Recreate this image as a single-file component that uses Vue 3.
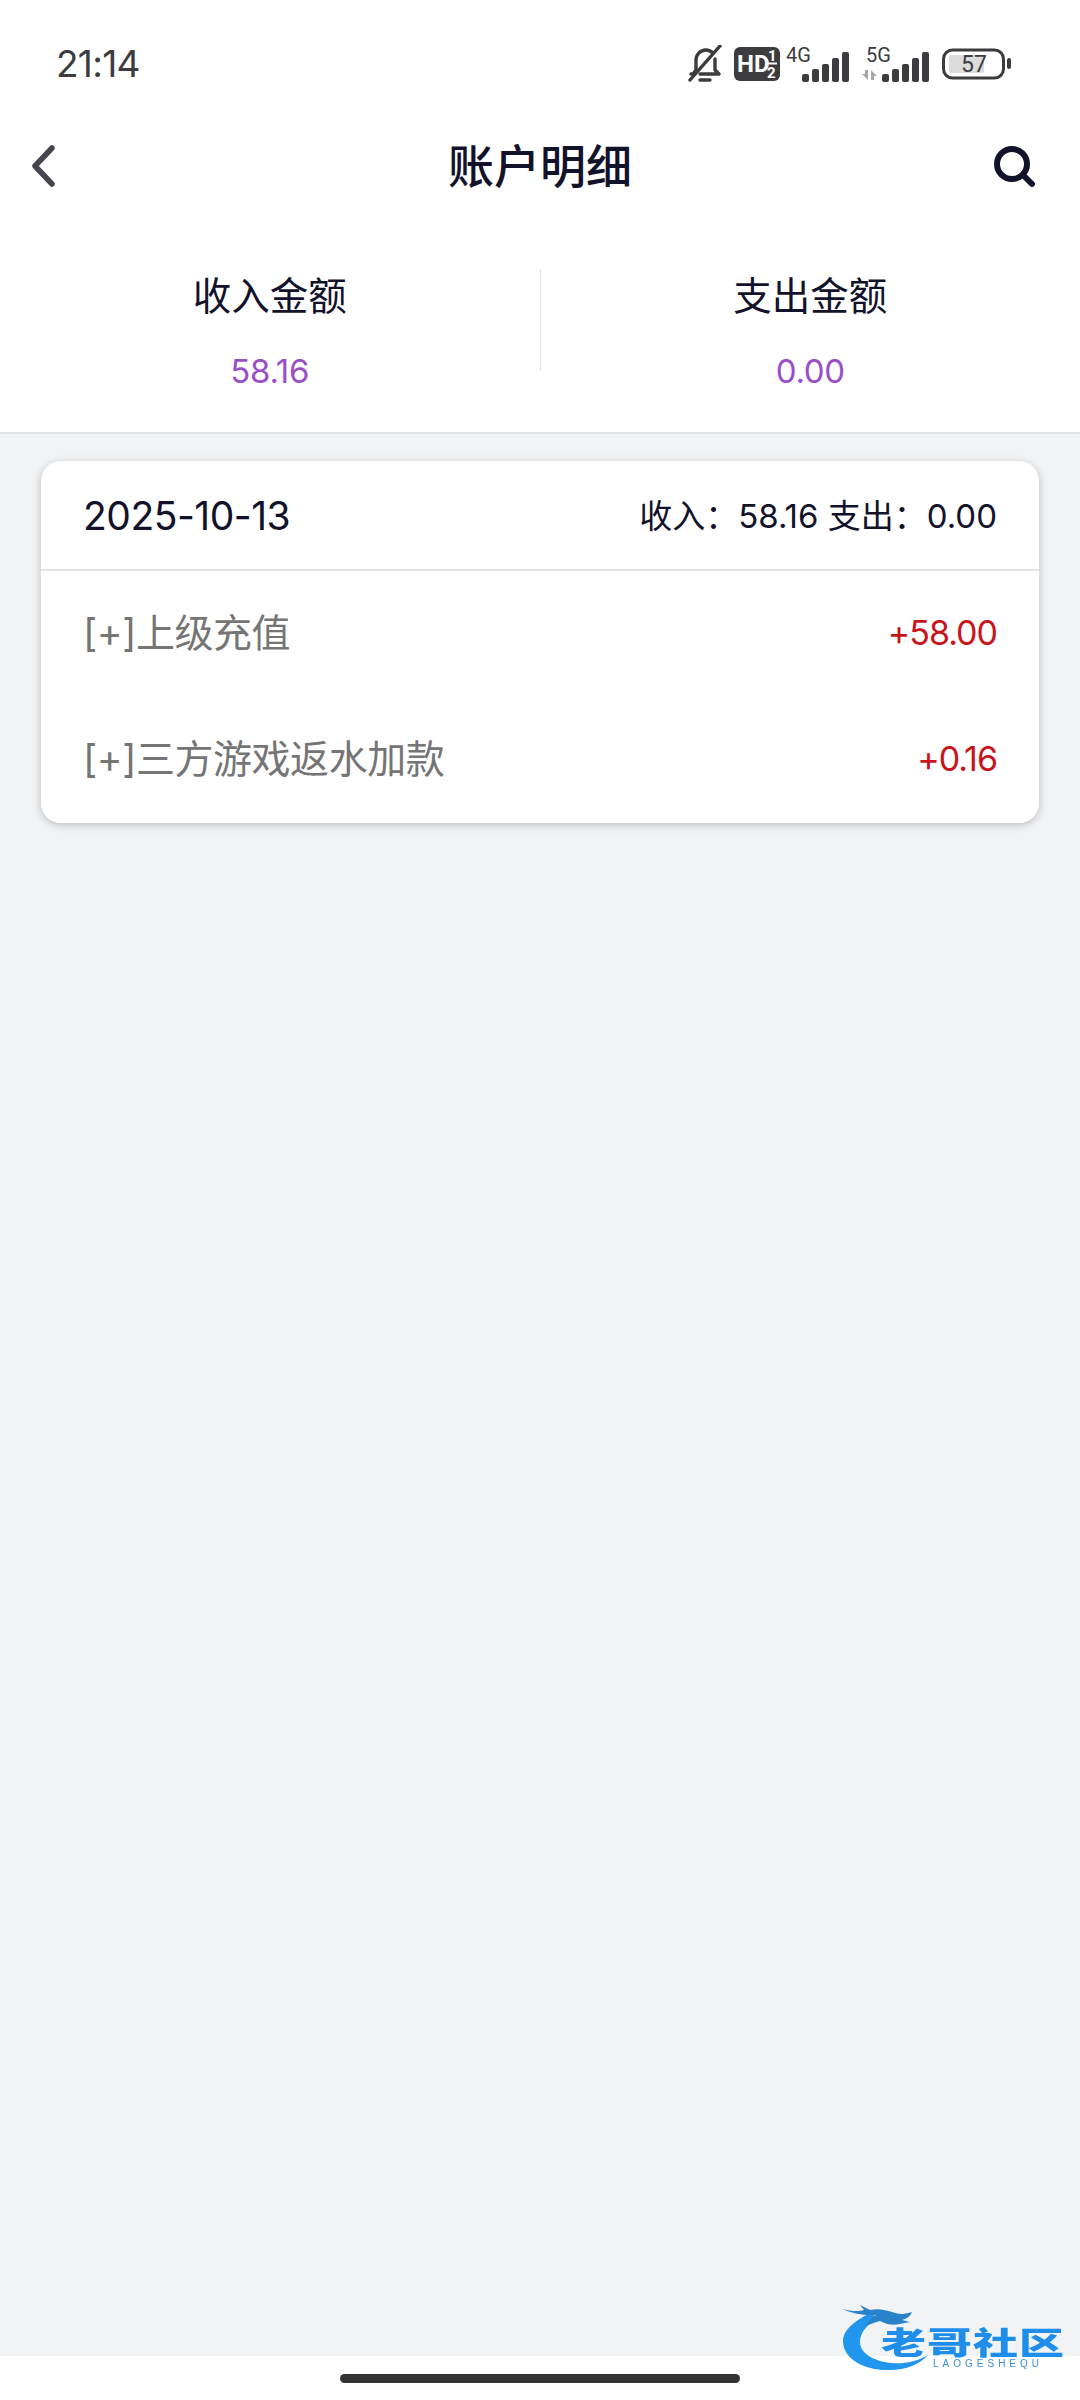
<script setup>
const rows = [
  { label: '[+]上级充值', amount: '+58.00' },
  { label: '[+]三方游戏返水加款', amount: '+0.16' },
]
const bars = [
  { x: 0, h: 8 },
  { x: 10, h: 13 },
  { x: 20, h: 18 },
  { x: 30, h: 24 },
  { x: 40, h: 30 },
]
</script>

<template>
  <div class="page">
    <div class="top">
      <div class="status">
        <span class="time">21:14</span>
        <div class="status-icons">
          <svg class="bell" width="34" height="38" viewBox="0 0 34 38" fill="none" stroke="#3c3c3f" stroke-width="3.4" stroke-linecap="round" stroke-linejoin="round">
            <path d="M3 29h2l3-4V15c0-5 4-10 10-10 3 0 5 1 7 3" />
            <path d="M27 14v11l4 4H12" />
            <path d="M12 35h10" />
            <path d="M32 1L2 35" />
          </svg>
          <svg class="hd" width="46" height="34" viewBox="0 0 46 34">
            <rect width="46" height="34" rx="6" fill="#3c3c3f" />
            <text x="3" y="25" class="hd-text">HD</text>
            <text x="34" y="14" class="hd-sub">1</text>
            <rect x="32" y="15.5" width="11" height="2" fill="#fff" />
            <text x="33" y="31" class="hd-sub">2</text>
          </svg>
          <svg class="net" width="64" height="46" viewBox="0 0 64 46">
            <text x="0" y="21" class="net-label">4G</text>
            <rect v-for="b in bars" :key="b.x" :x="b.x + 16" :y="41 - b.h" width="7" :height="b.h" rx="2" fill="#3c3c3f" />
          </svg>
          <svg class="net second" width="68" height="46" viewBox="0 0 68 46">
            <text x="4" y="21" class="net-label">5G</text>
            <path d="M6 29v10L0 33h3v-4zM9 39V29l6 6h-3v4z" fill="#a8a8ab" />
            <rect v-for="b in bars" :key="b.x" :x="b.x + 20" :y="41 - b.h" width="7" :height="b.h" rx="2" fill="#3c3c3f" />
          </svg>
          <svg class="battery" width="70" height="32" viewBox="0 0 70 32">
            <rect x="1.5" y="2" width="60" height="28" rx="9" fill="none" stroke="#3c3c3f" stroke-width="3" />
            <rect x="7" y="7" width="35" height="18" rx="2" fill="#dcdcdc" />
            <text x="32" y="24" class="battery-text">57</text>
            <rect x="65" y="10" width="4" height="11" rx="2" fill="#3c3c3f" />
          </svg>
        </div>
      </div>

      <div class="nav">
        <svg class="back" width="28" height="42" viewBox="0 0 28 42" fill="none" stroke="#45454f" stroke-width="5.5" stroke-linecap="round" stroke-linejoin="round">
          <path d="M22 3L5 21l17 18" />
        </svg>
        <span class="title">账户明细</span>
        <svg class="search" width="44" height="44" viewBox="0 0 44 44" fill="none" stroke="#12122a" stroke-linecap="round">
          <circle cx="20" cy="20" r="15" stroke-width="6" />
          <path d="M31 31l9 9" stroke-width="6" />
        </svg>
      </div>

      <div class="summary">
        <div class="summary-cell">
          <span class="summary-label">收入金额</span>
          <span class="summary-value">58.16</span>
        </div>
        <div class="summary-rule"></div>
        <div class="summary-cell">
          <span class="summary-label">支出金额</span>
          <span class="summary-value">0.00</span>
        </div>
      </div>
    </div>

    <main class="content">
      <section class="card">
        <header class="card-head">
          <span class="date">2025-10-13</span>
          <span class="totals">收入：58.16 支出：0.00</span>
        </header>
        <div v-for="row in rows" :key="row.label" class="row">
          <span class="row-label">{{ row.label }}</span>
          <span class="row-amount">{{ row.amount }}</span>
        </div>
      </section>
    </main>

    <div class="home-bar">
      <span class="home-pill"></span>
    </div>

    <div class="brand">
      <svg class="dragon" width="120" height="74" viewBox="0 0 120 74">
        <path d="M30 9C12 18 2 28 3 38c1 18 23 29 47 28 16 0 30-6 38-15-12 7-24 9-36 8-16-1-32-9-32-21 0-10 8-18 18-24z" fill="#2196ee" />
        <path d="M2 5c8 2 16 3 22 1l-4-5 10 5c8-2 16 0 22 2 8 3 14 2 20 0-2 5-6 7-10 8l8 2-10 2c-8 2-14 0-20-3-6 2-10 3-14 5 2-5 6-9 10-11C26 12 14 10 2 5z" fill="#2a83c9" />
      </svg>
      <span class="brand-name">老哥社区</span>
      <span class="brand-sub">LAOGESHEQU</span>
    </div>
  </div>
</template>

<style scoped>
.page {
  position: relative;
  width: 1080px;
  height: 2400px;
  background: #f2f3f5;
  font-family: Inter, "Noto Sans CJK SC", sans-serif;
  overflow: hidden;
  display: flex;
  flex-direction: column;
}
.top {
  background: #fff;
  border-bottom: 2px solid #e4e4e6;
}
.status {
  height: 124px;
  padding: 3px 68px 0 56px;
  box-sizing: border-box;
  display: flex;
  align-items: center;
  justify-content: space-between;
}
.time {
  font-size: 37px;
  color: #3c3c3f;
  letter-spacing: -0.7px;
}
.status-icons {
  display: flex;
  align-items: center;
  gap: 6px;
}
.bell {
  margin-right: 6px;
}
.hd-text {
  font: 700 24px Roboto, sans-serif;
  fill: #fff;
}
.hd-sub {
  font: 700 15px Roboto, sans-serif;
  fill: #fff;
}
.net-label {
  font: 400 20px Roboto, sans-serif;
  fill: #3c3c3f;
}
.second {
  margin-left: 6px;
}
.battery {
  margin-left: 6px;
}
.battery-text {
  font: 400 23px Roboto, sans-serif;
  fill: #3c3c3f;
  text-anchor: middle;
}
.nav {
  height: 84px;
  padding: 0 44px 0 30px;
  display: flex;
  align-items: center;
  justify-content: space-between;
  position: relative;
}
.title {
  position: absolute;
  left: 0;
  right: 0;
  padding-bottom: 6px;
  text-align: center;
  font-size: 46px;
  font-weight: 500;
  color: #12122a;
}
.summary {
  height: 224px;
  display: flex;
  align-items: center;
  padding-top: 21px;
  box-sizing: border-box;
}
.summary-cell {
  flex: 1;
  display: flex;
  flex-direction: column;
  align-items: center;
  gap: 30px;
}
.summary-label {
  font-size: 38.5px;
  line-height: 50px;
  color: #12122a;
}
.summary-value {
  font-size: 33px;
  line-height: 40px;
  letter-spacing: -0.3px;
  color: #9a4fc8;
}
.summary-rule {
  width: 1px;
  height: 102px;
  margin-bottom: 21px;
  background: #e4e4e6;
}
.content {
  flex: 1;
  padding: 27px 41px 0;
}
.card {
  background: #fff;
  border-radius: 20px;
  box-shadow: 0 2px 8px rgba(0, 0, 0, 0.22);
  overflow: hidden;
}
.card-head {
  height: 108px;
  padding: 0 42px;
  display: flex;
  align-items: center;
  justify-content: space-between;
  border-bottom: 2px solid #e4e4e6;
}
.date {
  font-size: 39px;
  letter-spacing: -0.5px;
  color: #12122a;
}
.totals {
  padding-bottom: 2px;
  font-size: 33px;
  color: #12122a;
}
.row {
  height: 126px;
  padding: 0 42px;
  display: flex;
  align-items: center;
  justify-content: space-between;
}
.row-label {
  padding-bottom: 8px;
  font-size: 39px;
  letter-spacing: -0.45px;
  color: #757575;
}
.row-amount {
  padding-bottom: 3px;
  font-size: 34px;
  letter-spacing: -1px;
  color: #c8141c;
}
.home-bar {
  height: 44px;
  background: #fff;
  display: flex;
  justify-content: center;
  padding-top: 18px;
  box-sizing: border-box;
}
.home-pill {
  width: 400px;
  height: 9px;
  border-radius: 5px;
  background: #333;
}
/* Soft community watermark that sits over the page corner */
.brand {
  position: absolute;
  left: 840px;
  top: 2304px;
  width: 226px;
  height: 72px;
  filter: blur(0.6px);
}
.dragon {
  position: absolute;
  left: 0;
  top: 0;
}
.brand-name {
  position: absolute;
  left: 41px;
  top: 22px;
  font: 900 45px/30px "Noto Sans CJK SC", sans-serif;
  letter-spacing: 1px;
  white-space: nowrap;
  transform: scaleY(0.68);
  color: #1e8eea;
}
.brand-sub {
  position: absolute;
  left: 93px;
  top: 54px;
  font: 400 10px/11px "Liberation Sans", sans-serif;
  letter-spacing: 4px;
  color: #3e8fd6;
  white-space: nowrap;
}
</style>
